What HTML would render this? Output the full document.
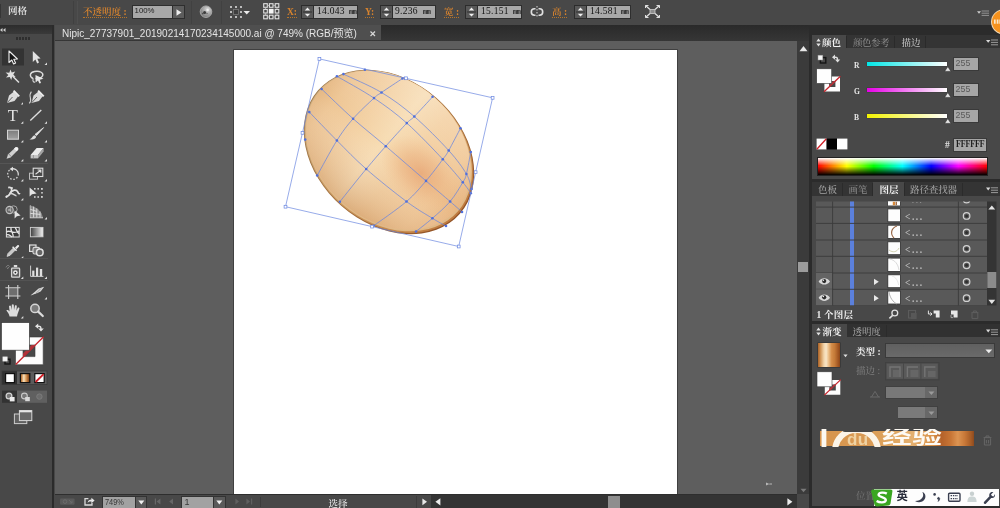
<!DOCTYPE html>
<html lang="zh"><head><meta charset="utf-8"><title>Illustrator</title>
<style>
*{margin:0;padding:0;box-sizing:border-box}
html,body{width:1000px;height:508px;overflow:hidden;background:#484848}
body{position:relative;font-family:"Liberation Serif","Noto Serif CJK SC",serif;font-size:9.5px;color:#ddd}
.a{position:absolute}
.ui{font-family:"Liberation Serif","Noto Serif CJK SC",serif;font-size:9.5px;line-height:10px;white-space:nowrap;font-weight:500}
.num{font-family:"Liberation Serif","Noto Serif CJK SC",serif;font-size:9.5px;line-height:10px;white-space:nowrap;color:#111;letter-spacing:0.3px}
.sans{font-family:"Liberation Sans","Noto Sans CJK SC",sans-serif;white-space:nowrap}
.field{background:#a8a8a8;border:1px solid #2e2e2e}
.or{color:#d9842e;font-weight:600}
.ul{border-bottom:1px dotted #b87428}
#root{position:absolute;left:0;top:0;width:1000px;height:508px;will-change:transform}
</style></head><body><div id="root">
<!-- top control bar -->
<div class="a" id="topbar" style="left:0;top:0;width:1000px;height:25px;background:#484848"></div>
<div class="a" style="left:0;top:4px;width:1.4px;height:14px;background:#363636"></div>
<div class="a ui" style="left:8px;top:6px;color:#e8e8e8;font-weight:600">网格</div>
<div class="a" style="left:73px;top:1px;width:1px;height:23px;background:#404040"></div>
<div class="a" style="left:77px;top:1px;width:1px;height:23px;background:#4f4f4f"></div>
<div class="a ui or ul" style="left:83px;top:7px;height:11px">不透明度 :</div>
<div class="a field" style="left:132px;top:5px;width:41px;height:14px"></div>
<div class="a sans" style="left:134.6px;top:6.4px;font-size:7.8px;line-height:10px;color:#1e1e1e">100%</div>
<div class="a" style="left:173px;top:5px;width:12px;height:14px;background:#5c5c5c;border:1px solid #2e2e2e;border-left:none"></div>
<svg class="a" style="left:176px;top:9px" width="6" height="7"><path d="M0.5 0.3 L5.5 3.5 L0.5 6.7Z" fill="#ededed"/></svg>
<div class="a" style="left:191px;top:1px;width:1px;height:23px;background:#414141"></div>
<!-- globe -->
<svg class="a" style="left:199px;top:5px" width="14" height="14"><defs><radialGradient id="glb" cx="0.65" cy="0.3" r="0.8"><stop offset="0" stop-color="#d8d8d8"/><stop offset="0.6" stop-color="#9a9a9a"/><stop offset="1" stop-color="#6e6e6e"/></radialGradient></defs><circle cx="7" cy="6.7" r="5.8" fill="url(#glb)" stroke="#b4b4b4" stroke-width="0.8"/><circle cx="5.6" cy="7.6" r="1.5" fill="#3c3c3c"/><circle cx="3.8" cy="8.6" r="0.8" fill="#4a4a4a"/><circle cx="8.6" cy="5" r="1.2" fill="#eee"/><circle cx="8" cy="8.6" r="0.7" fill="#555"/></svg>
<div class="a" style="left:221px;top:1px;width:1px;height:23px;background:#414141"></div>
<!-- align icon -->
<svg class="a" style="left:229px;top:5px" width="24" height="14"><g fill="#bcbcbc"><rect x="1" y="1" width="2" height="2"/><rect x="6" y="1" width="2" height="2"/><rect x="11" y="1" width="2" height="2"/><rect x="1" y="6" width="2" height="2"/><rect x="11" y="6" width="2" height="2"/><rect x="1" y="11" width="2" height="2"/><rect x="6" y="11" width="2" height="2"/><rect x="11" y="11" width="2" height="2"/></g><rect x="4.5" y="4.5" width="5" height="5" fill="#3e3e3e" stroke="#7a7a7a" stroke-width="0.8"/><path d="M14.5 6 L21 6 L17.75 9.5Z" fill="#ececec"/></svg>
<!-- 9-point reference -->
<svg class="a" style="left:263px;top:3px" width="17" height="17">
<g fill="#4a4a4a" stroke="#e2e2e2" stroke-width="1.1">
<rect x="0.7" y="0.7" width="3.6" height="3.6"/><rect x="6.4" y="0.7" width="3.6" height="3.6"/><rect x="12.2" y="0.7" width="3.6" height="3.6"/>
<rect x="0.7" y="6.4" width="3.6" height="3.6"/><rect x="12.2" y="6.4" width="3.6" height="3.6"/>
<rect x="0.7" y="12.2" width="3.6" height="3.6"/><rect x="6.4" y="12.2" width="3.6" height="3.6"/><rect x="12.2" y="12.2" width="3.6" height="3.6"/>
</g><path d="M4.3 2.5H6.4M10 2.5H12.2M4.3 14H6.4M10 14H12.2M2.5 4.3V6.4M2.5 10V12.2M14 4.3V6.4M14 10V12.2" stroke="#bdbdbd" stroke-width="0.8"/><rect x="5.8" y="5.8" width="4.8" height="4.8" fill="#f4f4f4"/></svg>
<div class="a ui or ul" style="left:287px;top:7px;height:11px">X:</div>
<div class="a ui or ul" style="left:365px;top:7px;height:11px">Y:</div>
<div class="a ui or ul" style="left:444px;top:7px;height:11px">宽 :</div>
<div class="a ui or ul" style="left:552px;top:7px;height:11px">高 :</div>
<div class="a" style="left:301px;top:5px;width:13px;height:14px;background:#585858;border:1px solid #2c2c2c"></div><svg class="a" style="left:303px;top:6px" width="9" height="12"><path d="M0 6H9" stroke="#333" stroke-width="1"/><path d="M1.8 4.4 L4.5 1.6 L7.2 4.4Z M1.8 7.8 L4.5 10.6 L7.2 7.8Z" fill="#f0f0f0"/></svg><div class="a field" style="left:314px;top:5px;width:44px;height:14px;border-left:none"></div><div class="a num" style="left:317px;top:6.4px">14.043</div><div class="a num" style="left:349px;top:6.9px;font-family:'Liberation Mono',monospace;font-size:6.8px;letter-spacing:-0.3px;color:#1a1a1a;font-weight:bold">mm</div>\n<div class="a" style="left:380px;top:5px;width:13px;height:14px;background:#585858;border:1px solid #2c2c2c"></div><svg class="a" style="left:382px;top:6px" width="9" height="12"><path d="M0 6H9" stroke="#333" stroke-width="1"/><path d="M1.8 4.4 L4.5 1.6 L7.2 4.4Z M1.8 7.8 L4.5 10.6 L7.2 7.8Z" fill="#f0f0f0"/></svg><div class="a field" style="left:393px;top:5px;width:43px;height:14px;border-left:none"></div><div class="a num" style="left:395px;top:6.4px">9.236</div><div class="a num" style="left:423px;top:6.9px;font-family:'Liberation Mono',monospace;font-size:6.8px;letter-spacing:-0.3px;color:#1a1a1a;font-weight:bold">mm</div>\n<div class="a" style="left:465px;top:5px;width:13px;height:14px;background:#585858;border:1px solid #2c2c2c"></div><svg class="a" style="left:467px;top:6px" width="9" height="12"><path d="M0 6H9" stroke="#333" stroke-width="1"/><path d="M1.8 4.4 L4.5 1.6 L7.2 4.4Z M1.8 7.8 L4.5 10.6 L7.2 7.8Z" fill="#f0f0f0"/></svg><div class="a field" style="left:478px;top:5px;width:44px;height:14px;border-left:none"></div><div class="a num" style="left:481px;top:6.4px">15.151</div><div class="a num" style="left:513px;top:6.9px;font-family:'Liberation Mono',monospace;font-size:6.8px;letter-spacing:-0.3px;color:#1a1a1a;font-weight:bold">mm</div>\n<div class="a" style="left:574px;top:5px;width:13px;height:14px;background:#585858;border:1px solid #2c2c2c"></div><svg class="a" style="left:576px;top:6px" width="9" height="12"><path d="M0 6H9" stroke="#333" stroke-width="1"/><path d="M1.8 4.4 L4.5 1.6 L7.2 4.4Z M1.8 7.8 L4.5 10.6 L7.2 7.8Z" fill="#f0f0f0"/></svg><div class="a field" style="left:587px;top:5px;width:44px;height:14px;border-left:none"></div><div class="a num" style="left:590px;top:6.4px">14.581</div><div class="a num" style="left:621px;top:6.9px;font-family:'Liberation Mono',monospace;font-size:6.8px;letter-spacing:-0.3px;color:#1a1a1a;font-weight:bold">mm</div>\n
<!-- link icon -->
<svg class="a" style="left:530px;top:6px" width="14" height="13"><g fill="none" stroke="#e0e0e0" stroke-width="1.6"><path d="M5.5 2.8 H4.5 A3.2 3.2 0 0 0 4.5 9.2 H5.5"/><path d="M8.5 2.8 H9.5 A3.2 3.2 0 0 1 9.5 9.2 H8.5"/></g><path d="M7 0 V12" stroke="#d8d8d8" stroke-width="1" stroke-dasharray="1.5 1.5"/></svg>
<!-- transform icon -->
<svg class="a" style="left:645px;top:5px" width="15" height="13"><g stroke="#e0e0e0" stroke-width="1.3" fill="none"><path d="M0.5 0.5 L5 4.5 M14.5 0.5 L10 4.5 M0.5 12.5 L5 8.5 M14.5 12.5 L10 8.5"/><path d="M0.5 3V0.5H3.5M11.5 0.5H14.5V3M0.5 10V12.5H3.5M11.5 12.5H14.5V10" stroke-width="1"/></g><rect x="5" y="4.5" width="5" height="4" fill="#8e8e8e" stroke="#d0d0d0" stroke-width="0.8"/></svg>
<!-- panel menu icon top right -->
<svg class="a" style="left:976.5px;top:9.6px" width="12" height="7"><path d="M0 1.2 L4 1.2 L2 3.8Z" fill="#ccc"/><path d="M4.6 1 H12 M4.6 3.2 H12 M4.6 5.4 H12" stroke="#9c9c9c" stroke-width="0.9"/></svg>
<!-- tab bar -->
<div class="a" id="tabbar" style="left:54.5px;top:25px;width:756.5px;height:16px;background:linear-gradient(#2a2a2a,#363636)"></div>
<div class="a" id="tab" style="left:54.5px;top:25px;width:326.5px;height:15px;background:#4f4f4f"></div>
<div class="a sans" style="left:62px;top:28px;font-size:10px;line-height:12px;color:#e4e4e4">Nipic_27737901_20190214170234145000.ai @ 749% (RGB/预览)</div>
<svg class="a" style="left:370px;top:31px" width="6" height="6"><path d="M0.5 0.5L5 5M5 0.5L0.5 5" stroke="#d8d8d8" stroke-width="1.2"/></svg>
<!-- canvas -->
<div class="a" id="canvas" style="left:54.5px;top:41px;width:742.5px;height:453px;background:#5e5e5e"></div>
<div class="a" id="artboard" style="left:233.6px;top:50.4px;width:443.8px;height:443.8px;background:#fff;box-shadow:0 0 0 0.9px #3e3e3e"></div>
<svg class="a" style="left:765px;top:481px" width="8" height="6"><!-- artefact --><path d="M1 1.6 L4.4 3 L1 4.4Z M4.4 2.6 H7 V3.4 H4.4Z" fill="#b8b8b8"/></svg>
<!-- egg -->
<svg class="a" style="left:234px;top:50px" width="444" height="444" viewBox="234 50 444 444">
<defs>
<linearGradient id="eggFill" x1="0" y1="0" x2="1" y2="0"><stop offset="0" stop-color="#e6b985"/><stop offset="0.1" stop-color="#eec695"/><stop offset="0.28" stop-color="#f3d0a2"/><stop offset="0.45" stop-color="#f7dcb3"/><stop offset="0.62" stop-color="#f3cfa0"/><stop offset="0.85" stop-color="#f0c694"/><stop offset="1" stop-color="#e8b682"/></linearGradient>
<radialGradient id="eggSpot" cx="0.5" cy="0.5" r="0.5"><stop offset="0" stop-color="#e6a070" stop-opacity="0.7"/><stop offset="0.5" stop-color="#e8a878" stop-opacity="0.38"/><stop offset="1" stop-color="#eeb888" stop-opacity="0"/></radialGradient>
<linearGradient id="eggRim" x1="0" y1="0" x2="1" y2="0"><stop offset="0" stop-color="#a07a4a"/><stop offset="0.5" stop-color="#a6703c"/><stop offset="1" stop-color="#935326"/></linearGradient>
<linearGradient id="eggRim2" x1="0" y1="0" x2="1" y2="0"><stop offset="0" stop-color="#c4a57c"/><stop offset="0.5" stop-color="#cc9c62"/><stop offset="1" stop-color="#c07c40"/></linearGradient>
<linearGradient id="eggShade" x1="0" y1="0" x2="0" y2="1"><stop offset="0" stop-color="#fff" stop-opacity="0.18"/><stop offset="0.5" stop-color="#fff" stop-opacity="0"/><stop offset="1" stop-color="#b06a30" stop-opacity="0.35"/></linearGradient>
<clipPath id="eggClip"><ellipse cx="389" cy="152" rx="94" ry="72" transform="rotate(41 389 152)"/></clipPath>
</defs>
<g transform="rotate(41 389 152)">
<ellipse cx="389" cy="152" rx="94" ry="72" fill="url(#eggRim)"/>
<ellipse cx="388.7" cy="151.8" rx="93" ry="71.2" fill="url(#eggRim2)"/>
<ellipse cx="388.1" cy="151.4" rx="91.8" ry="70.5" fill="#e0b987"/>
<ellipse cx="387.5" cy="151" rx="90.5" ry="70" fill="url(#eggFill)"/>
<ellipse cx="387.5" cy="151" rx="90.5" ry="70" fill="url(#eggShade)"/>
</g>
<g clip-path="url(#eggClip)"><ellipse cx="421" cy="173" rx="46" ry="30" transform="rotate(41 421 173)" fill="url(#eggSpot)"/></g>
<g fill="none" stroke="#6a86e0" stroke-width="0.75" clip-path="url(#eggClip)">
<path d="M343.4 74.1 C349.8 77.2 369.7 85.4 381.5 92.5 C393.3 99.6 403.1 106.8 414.3 116.5 C425.5 126.2 440.0 140.9 448.7 150.5 C457.4 160.1 462.6 167.6 466.4 174.0 C470.2 180.4 470.6 186.5 471.5 189.0"/>
<path d="M336.9 76.3 C343.1 79.9 362.4 90.3 374.0 98.1 C385.6 105.9 395.3 112.9 406.8 123.1 C418.3 133.3 433.5 149.4 442.8 159.3 C452.1 169.2 458.1 176.7 462.8 182.3 C467.5 188.0 469.5 191.4 470.8 193.2"/>
<path d="M321.6 89.0 C326.9 94.0 342.4 109.2 353.1 118.7 C363.8 128.2 373.7 135.8 385.8 146.2 C397.9 156.6 415.3 171.7 426.0 180.9 C436.7 190.1 444.1 196.3 450.1 201.5 C456.1 206.7 460.0 210.2 462.0 212.0"/>
<path d="M309.3 112.1 C313.9 116.8 327.4 131.0 336.9 140.5 C346.4 150.0 354.6 158.8 366.2 169.0 C377.8 179.2 395.5 193.3 406.5 201.5 C417.5 209.7 425.8 214.2 432.4 218.3 C439.0 222.4 443.7 224.7 446.0 226.0"/>
<path d="M402.5 78.5 C399.0 80.8 386.2 89.2 381.5 92.5 C376.8 95.8 378.7 93.7 374.0 98.1 C369.3 102.5 359.3 111.6 353.1 118.7 C346.9 125.8 342.9 131.0 336.9 140.5 C330.9 150.0 320.5 169.7 317.2 175.5"/>
<path d="M432.6 96.8 C429.6 100.1 418.6 112.1 414.3 116.5 C410.0 120.9 411.6 118.1 406.8 123.1 C402.1 128.0 392.6 138.5 385.8 146.2 C379.0 153.8 373.9 159.8 366.2 169.0 C358.5 178.2 344.3 196.2 339.9 201.7"/>
<path d="M460.5 128.3 C458.5 132.0 451.6 145.3 448.7 150.5 C445.8 155.7 446.6 154.2 442.8 159.3 C439.0 164.4 432.1 173.9 426.0 180.9 C419.9 187.9 415.2 194.0 406.5 201.5 C397.8 209.0 379.1 221.8 373.6 225.8"/>
<path d="M470.8 152.0 C470.1 155.7 467.7 168.9 466.4 174.0 C465.1 179.1 465.5 177.7 462.8 182.3 C460.1 186.9 455.2 195.5 450.1 201.5 C445.0 207.5 438.1 213.3 432.4 218.3 C426.7 223.3 418.7 229.3 416.0 231.5"/>
</g>
<g fill="#4f6fdc"><circle cx="305.2" cy="139.6" r="1.3"/><circle cx="309.3" cy="112.1" r="1.3"/><circle cx="317.2" cy="175.5" r="1.3"/><circle cx="321.6" cy="89" r="1.3"/><circle cx="336.9" cy="76.3" r="1.3"/><circle cx="336.9" cy="140.5" r="1.3"/><circle cx="339.9" cy="201.7" r="1.3"/><circle cx="343.4" cy="74.1" r="1.3"/><circle cx="353.1" cy="118.7" r="1.3"/><circle cx="364.9" cy="69.7" r="1.3"/><circle cx="366.2" cy="169" r="1.3"/><circle cx="373.6" cy="225.8" r="1.3"/><circle cx="374" cy="98.1" r="1.3"/><circle cx="381.5" cy="92.5" r="1.3"/><circle cx="385.8" cy="146.2" r="1.3"/><circle cx="402.5" cy="78.5" r="1.3"/><circle cx="406.5" cy="201.5" r="1.3"/><circle cx="406.8" cy="123.1" r="1.3"/><circle cx="414.3" cy="116.5" r="1.3"/><circle cx="416" cy="231.5" r="1.3"/><circle cx="426" cy="180.9" r="1.3"/><circle cx="432.4" cy="218.3" r="1.3"/><circle cx="432.6" cy="96.8" r="1.3"/><circle cx="442.8" cy="159.3" r="1.3"/><circle cx="446" cy="226" r="1.3"/><circle cx="448.7" cy="150.5" r="1.3"/><circle cx="450.1" cy="201.5" r="1.3"/><circle cx="460.5" cy="128.3" r="1.3"/><circle cx="462" cy="212" r="1.3"/><circle cx="462.8" cy="182.3" r="1.3"/><circle cx="466.4" cy="174" r="1.3"/><circle cx="470.8" cy="152" r="1.3"/><circle cx="470.8" cy="193.2" r="1.3"/><circle cx="471.5" cy="189" r="1.3"/></g>
<path d="M319.4 58.9 L492.6 97.8 L458.7 246.5 L285.5 206.7Z" fill="none" stroke="#6a86e0" stroke-width="0.7"/>
<g fill="#fff" stroke="#6a86e0" stroke-width="0.7"><rect x="318.0" y="57.5" width="2.8" height="2.8"/><rect x="491.2" y="96.4" width="2.8" height="2.8"/><rect x="457.3" y="245.1" width="2.8" height="2.8"/><rect x="284.1" y="205.3" width="2.8" height="2.8"/><rect x="404.6" y="76.9" width="2.8" height="2.8"/><rect x="474.2" y="170.8" width="2.8" height="2.8"/><rect x="370.7" y="225.2" width="2.8" height="2.8"/><rect x="301.1" y="131.4" width="2.8" height="2.8"/></g>
</svg>
<!-- toolbar -->
<div class="a" id="toolbar" style="left:0;top:25px;width:52px;height:483px;background:#484848"></div>
<div class="a" style="left:0;top:25px;width:52px;height:9px;background:linear-gradient(#2c2c2c,#3a3a3a)"></div>
<div class="a" style="left:52.3px;top:25px;width:2.2px;height:483px;background:#2b2b2b"></div>
<svg class="a" style="left:0;top:25px" width="52" height="483" viewBox="0 25 52 483">
<defs>
<linearGradient id="gCop" x1="0" x2="1" y1="0" y2="0"><stop offset="0" stop-color="#8a4e20"/><stop offset="0.15" stop-color="#c88848"/><stop offset="0.36" stop-color="#f8e4c4"/><stop offset="0.55" stop-color="#e2aa6a"/><stop offset="0.8" stop-color="#a8622a"/><stop offset="1" stop-color="#6a3814"/></linearGradient>
<linearGradient id="gGray" x1="0" x2="1"><stop offset="0" stop-color="#3c3c3c"/><stop offset="1" stop-color="#f4f4f4"/></linearGradient>
<linearGradient id="gRect" x1="0" x2="0" y1="0" y2="1"><stop offset="0" stop-color="#7c7c7c"/><stop offset="1" stop-color="#a0a0a0"/></linearGradient>
</defs>
<!-- collapse arrows -->
<path d="M0 30 L2.5 28 V32Z M3 30 L5.5 28 V32Z" fill="#d0d0d0"/>
<!-- grip -->
<path d="M16 38.5H31" stroke="#2e2e2e" stroke-width="3" stroke-dasharray="2 1"/>
<!-- selection tool (selected) -->
<rect x="2" y="48.5" width="22" height="17" fill="#333"/>
<path d="M9 51 V62.5 L11.8 60 L13.6 64 L15.6 63 L13.8 59.2 L17.4 59Z" fill="#151515" stroke="#f0f0f0" stroke-width="1.1" stroke-linejoin="round"/>
<!-- direct selection -->
<path d="M32.8 51 V62 L35.4 59.6 L37.2 63.4 L39 62.5 L37.3 58.8 L40.6 58.6Z" fill="#e2e2e2"/>
<g fill="#dedede" id="dots">
<path d="M47 62.5V65H44.5Z"/>
<path d="M23 102.3V104.5H20.8Z"/>
<path d="M23.3 121.3V123.8H20.8Z"/><path d="M47 121.3V123.8H44.5Z"/>
<path d="M23.3 140V142.5H20.8Z"/><path d="M47 140V142.5H44.5Z"/>
<path d="M23.3 159V161.5H20.8Z"/><path d="M47 159V161.5H44.5Z"/>
<path d="M23.3 179V181.5H20.8Z"/><path d="M47 179V181.5H44.5Z"/>
<path d="M23.3 198V200.5H20.8Z"/>
<path d="M23.3 217V219.5H20.8Z"/><path d="M47 217V219.5H44.5Z"/>
<path d="M23.3 256V258.5H20.8Z"/>
<path d="M23.3 276.5V279H20.8Z"/><path d="M47 276.5V279H44.5Z"/>
<path d="M47 297V299.5H44.5Z"/>
<path d="M23.3 316V318.5H20.8Z"/>
</g>
<!-- magic wand -->
<path d="M10.5 69.5 L11.7 72.6 L15.2 71.6 L13.3 74.4 L15.6 77 L12.2 76.8 L11.2 80 L9.8 76.9 L6 77.6 L8.4 75 L5.6 72.6 L9.3 72.8Z" fill="#e0e0e0"/>
<path d="M13 76.5 L19 82.5" stroke="#e0e0e0" stroke-width="1.5"/>
<!-- lasso -->
<path d="M33 78.5 C29 76.5 29.5 72.5 34.5 71.5 C40 70.5 44 73 42.5 76 C41.5 78 38 79 35.5 78.3" fill="none" stroke="#dcdcdc" stroke-width="1.4"/>
<path d="M35.5 75 L43.5 78.8 L39.8 79.8 L41 83 L39.4 83.4 L38 80.4 L35.6 82.5Z" fill="#e6e6e6"/>
<path d="M33.5 78.5 C32 80.5 33.5 82.5 35 82" fill="none" stroke="#dcdcdc" stroke-width="1.1"/>
<!-- pen -->
<path d="M7 103 L9 95.5 L14 91.5 L18 96.5 L14.5 101 Z" fill="#dadada"/>
<path d="M7.3 102.6 L12.5 97" stroke="#555" stroke-width="0.9"/>
<path d="M13.6 90.6 L19.2 96.4" stroke="#ececec" stroke-width="2"/>
<!-- curvature pen -->
<path d="M31.5 103 L33.5 95.5 L38.5 91.5 L42.5 96.5 L39 101 Z" fill="#dadada"/>
<path d="M31.8 102.6 L37 97" stroke="#555" stroke-width="0.9"/>
<path d="M38.1 90.6 L43.7 96.4" stroke="#ececec" stroke-width="2"/>
<path d="M29.2 103.4 C33.4 99.4 27.4 96.4 31.4 91.6" fill="none" stroke="#d0d0d0" stroke-width="1.1"/>
<!-- T -->
<text x="12.8" y="121" font-family="Liberation Serif, serif" font-size="16.5" fill="#e2e2e2" text-anchor="middle">T</text>
<!-- line -->
<path d="M30.3 120.4 L41.3 110" stroke="#dedede" stroke-width="1.4"/>
<!-- rect -->
<rect x="7.5" y="130.2" width="11" height="9" fill="url(#gRect)" stroke="#d4d4d4" stroke-width="1"/>
<!-- brush -->
<path d="M43.6 127.6 L36.5 135.6 L35 134.4Z" fill="#e6e6e6" stroke="#e6e6e6" stroke-width="0.8"/>
<path d="M29.4 139.2 C32 138.8 32.5 135.5 34.6 135.2 L36.2 136.8 C35.6 139.4 32.5 140 29.4 139.2Z" fill="#dcdcdc"/>
<!-- pencil -->
<path d="M6.6 158.8 L8 154.6 L15.4 147.4 C17 146 19.4 148.4 18 150 L10.6 157.4Z" fill="#cfcfcf"/>
<path d="M15.2 147.6 C16.8 146.2 19.2 148.4 17.8 150 L16.6 151.2 L14 148.7Z" fill="#f2f2f2"/>
<path d="M8.6 153.8 L11.2 156.6" stroke="#777" stroke-width="0.8"/>
<!-- eraser -->
<path d="M30.6 155 L36.6 148 L43.6 148 L38 155Z" fill="#ececec"/>
<path d="M30.6 155 H38 V158.4 H30.6Z" fill="#c6c6c6"/>
<path d="M38 155 L43.6 148 V151.4 L38 158.4Z" fill="#a4a4a4"/>
<path d="M33.4 155 V158.4" stroke="#8a8a8a" stroke-width="0.8"/>
<!-- separators -->
<path d="M0 163.5H48" stroke="#555" stroke-width="1"/>
<path d="M0 258.5H48" stroke="#535353" stroke-width="1"/>
<path d="M0 280.5H48" stroke="#535353" stroke-width="1"/>
<!-- rotate -->
<path d="M12.5 168.8 A5.3 5.3 0 0 1 18.3 174" fill="none" stroke="#dcdcdc" stroke-width="1.3"/>
<path d="M18.3 174 A5.3 5.3 0 1 1 12 168.9" fill="none" stroke="#cfcfcf" stroke-width="1.3" stroke-dasharray="1.6 1.6"/>
<path d="M13 166.8 L9.6 169 L13 171.2Z" fill="#e0e0e0"/>
<!-- scale -->
<rect x="29.5" y="173.2" width="8" height="6" fill="none" stroke="#bdbdbd" stroke-width="1"/>
<rect x="33.2" y="168.2" width="9.6" height="8.3" fill="#484848" stroke="#dedede" stroke-width="1.1"/>
<path d="M35.5 174.3 L40.6 170.2 M37.6 170 H40.8 V172.8" fill="none" stroke="#dedede" stroke-width="1.1"/>
<!-- width tool -->
<path d="M8.2 187.6 C12 186.6 12.6 190 10.4 193.2 C9 195.4 7.4 196.6 6 196.6" fill="none" stroke="#e0e0e0" stroke-width="1.7"/>
<path d="M9.6 193.6 C12.6 189 16.6 189.4 17.8 192 C18.6 193.6 19.4 194.4 19.6 193" fill="none" stroke="#e0e0e0" stroke-width="1.7"/>
<path d="M10.5 193.5 C13.5 193.3 14.5 196 16.5 195.6" fill="none" stroke="#d4d4d4" stroke-width="1.5"/>
<circle cx="6.4" cy="196.8" r="1.1" fill="#e6e6e6"/><circle cx="12" cy="188" r="0.9" fill="#e6e6e6"/>
<!-- free transform -->
<path d="M29.6 187.6 V196.4 L32 194.2 L36.6 193.4Z" fill="#e4e4e4"/>
<g fill="#d2d2d2"><rect x="34" y="188" width="1.6" height="1.6"/><rect x="37.4" y="188" width="1.6" height="1.6"/><rect x="41" y="188" width="1.8" height="1.8"/><rect x="41.2" y="192" width="1.6" height="1.6"/><rect x="41" y="196" width="1.8" height="1.8"/><rect x="37.4" y="196.2" width="1.6" height="1.6"/><rect x="34" y="196.2" width="1.6" height="1.6"/></g>
<!-- shape builder -->
<circle cx="9.6" cy="210" r="3.6" fill="#6a6a6a" stroke="#c4c4c4" stroke-width="1.1"/>
<circle cx="13.6" cy="209.4" r="3.6" fill="none" stroke="#a8a8a8" stroke-width="1"/>
<path d="M8 210H11.2" stroke="#c8c8c8" stroke-width="1"/>
<path d="M14.6 210.6 V218.4 L16.8 216.2 L20.6 215.6Z" fill="#e4e4e4"/>
<!-- perspective grid -->
<path d="M30.4 205.4 V217.6 H43" fill="none" stroke="#dcdcdc" stroke-width="1.2"/>
<path d="M30.4 205.6 L34.2 206.8 L38.4 209.6 L41.6 213.4 L43 217.4 H30.4Z" fill="#8c8c8c"/>
<path d="M33.6 206.6 V217.4 M36.8 208.4 V217.4 M40 211.4 V217.4 M30.4 209.4 L36.8 211.4 M30.4 213.4 L40.2 214.4" stroke="#e2e2e2" stroke-width="0.9" fill="none"/>
<!-- mesh tool -->
<rect x="6.4" y="227.4" width="12.8" height="9.6" fill="#3a3a3a" stroke="#e0e0e0" stroke-width="1"/>
<path d="M6.4 232 C10 229 12 235 19.2 231 M11 227.4 C10 231 14 233 13 237 M6.4 235 C9 233.6 10 236 12 237 M15 227.4 C17 229.4 16 232 19.2 233.6" fill="none" stroke="#e6e6e6" stroke-width="1.3"/>
<!-- gradient tool -->
<rect x="30.4" y="227.4" width="12.6" height="9.4" fill="url(#gGray)" stroke="#cfcfcf" stroke-width="0.9"/>
<!-- eyedropper -->
<path d="M7 256.4 L8 253.4 L13.6 247.8 L15.6 249.8 L10 255.4Z" fill="#c8c8c8" stroke="#dedede" stroke-width="0.7"/>
<path d="M12.6 246.8 L16.6 250.8" stroke="#e8e8e8" stroke-width="1.5"/>
<path d="M15 247.6 L17.2 245.4 C18.4 244.2 19.8 245.6 18.8 246.8 L16.4 249.2Z" fill="#eaeaea"/>
<!-- blend -->
<rect x="29.6" y="245" width="6.4" height="6.4" fill="#5a5a5a" stroke="#e0e0e0" stroke-width="1.2"/>
<rect x="33" y="247.4" width="6.6" height="6.6" rx="1.6" fill="#7a7a7a" stroke="#d8d8d8" stroke-width="1.1"/>
<circle cx="39.8" cy="252.4" r="3.3" fill="#666" stroke="#e4e4e4" stroke-width="1.5"/>
<!-- symbol sprayer -->
<rect x="11.6" y="268.2" width="8" height="9" rx="0.8" fill="#5a5a5a" stroke="#d6d6d6" stroke-width="1.3"/>
<rect x="13.8" y="265" width="3.4" height="2.2" fill="#dcdcdc"/>
<circle cx="15.4" cy="272.6" r="2.3" fill="#ececec"/><circle cx="15.4" cy="272.6" r="0.9" fill="#222"/>
<path d="M6 267.4 C7 265 9 265 9.6 266.6 M7 268.6 L9 267.4" stroke="#8e8e8e" stroke-width="0.9" fill="none"/>
<!-- graph -->
<path d="M30.6 265.6 V276.4 H43.4" fill="none" stroke="#cfcfcf" stroke-width="1"/>
<rect x="32.2" y="270.6" width="2.2" height="5.6" fill="#e0e0e0"/><rect x="36" y="267.6" width="2.2" height="8.6" fill="#e0e0e0"/><rect x="39.8" y="269" width="2.4" height="7.2" fill="#e0e0e0"/>
<!-- artboard tool -->
<rect x="9" y="288.2" width="8.4" height="7.6" fill="#6e6e6e"/>
<path d="M8.6 285 V299 M17.8 285 V299 M5.4 287.8 H20.4 M5.4 296 H20.4" stroke="#cfcfcf" stroke-width="1.1" fill="none"/>
<!-- slice -->
<path d="M30.4 295.6 L44 286.8 L37 293.4 L37.6 292.2Z" fill="#e2e2e2"/>
<path d="M30.6 295.4 L38.6 288.4 L44.2 286.8 L40.6 291.6 L36.6 293.2Z" fill="#d6d6d6"/>
<path d="M36.4 293 L40.8 288.6" stroke="#8a8a8a" stroke-width="0.8"/>
<!-- hand -->
<path d="M9.6 316.4 C9 313.6 7.6 312 6.4 310.4 C7.2 309.4 8.6 310 9.6 311.4 L9 306.2 C9.6 305.2 10.8 305.4 11 306.4 L11.6 310 L11.8 304.8 C12.4 303.8 13.6 304 13.8 305 L14 310 L15 305.6 C15.6 304.8 16.8 305.2 16.8 306.2 L16.4 310.8 L17.8 307.8 C18.6 307.2 19.6 307.8 19.4 308.8 C18.6 311.4 17.6 313.6 17 316.4Z" fill="#dcdcdc"/>
<!-- zoom -->
<circle cx="35" cy="308.4" r="4.2" fill="#7a7a7a" stroke="#d6d6d6" stroke-width="1.5"/>
<path d="M38.2 311.6 L42.8 316" stroke="#dcdcdc" stroke-width="2.2" stroke-linecap="round"/>
<!-- fill / stroke -->
<path d="M15.5 337 H43.2 V364.7 H15.5Z M23 345 V356.6 H35 V345Z" fill="#fdfdfd" fill-rule="evenodd" stroke="#3a3a3a" stroke-width="0.6"/>
<path d="M15.7 364.5 L43.6 336.8" stroke="#c8242c" stroke-width="1.3"/>
<path d="M23 356.6 L23 353.6 L31.6 345 L35 345 L35 345.2 L23.6 356.6Z" fill="#b0343a"/>
<rect x="1.4" y="322.6" width="28" height="27.6" fill="#fefefe" stroke="#3a3a3a" stroke-width="0.7"/>
<!-- swap arrows -->
<path d="M35 326.2 L38.2 323.6 V325.4 C41 325.4 41.6 326.6 41.6 328.4 L43.8 328.4 L41 331.4 L38.2 328.4 L40.2 328.4 C40.2 327.4 39.8 327 38.2 327 V328.8Z" fill="#e4e4e4"/>
<!-- default fill/stroke -->
<rect x="5" y="359.2" width="5" height="4.8" fill="#484848" stroke="#151515" stroke-width="1.4"/>
<rect x="2.8" y="356.8" width="4.6" height="4.4" fill="#f4f4f4" stroke="#bbb" stroke-width="0.5"/>
<!-- color mode buttons -->
<rect x="2" y="371" width="15" height="13.6" fill="#303030"/>
<rect x="17" y="371" width="30" height="13.6" fill="#5c5c5c"/>
<rect x="2" y="371" width="45" height="13.6" fill="none" stroke="#3a3a3a" stroke-width="0.8"/>
<rect x="5.6" y="373.6" width="8.8" height="9" fill="#fff" stroke="#111" stroke-width="1.2"/>
<rect x="20.4" y="373.6" width="9.4" height="9" fill="url(#gCop)" stroke="#111" stroke-width="1.2"/>
<rect x="34.8" y="373.6" width="9.4" height="9" fill="#fff" stroke="#111" stroke-width="1.2"/>
<path d="M35.6 382 L43.6 374.2" stroke="#d01c24" stroke-width="1.8"/>
<!-- draw modes -->
<rect x="2" y="390.6" width="15" height="12.2" fill="#323232"/>
<rect x="17" y="390.6" width="30" height="12.2" fill="#606060"/>
<circle cx="9" cy="396" r="2.9" fill="#777" stroke="#d4d4d4" stroke-width="1.2"/>
<rect x="9.8" y="397" width="4.8" height="4.4" fill="#eaeaea"/>
<circle cx="24.4" cy="396" r="2.9" fill="#777" stroke="#c8c8c8" stroke-width="1.1"/>
<rect x="25.2" y="397" width="4.6" height="4.2" fill="#d8d8d8"/>
<circle cx="39.4" cy="396.6" r="2.7" fill="#6c6c6c" stroke="#7c7c7c" stroke-width="1"/>
<!-- screen mode -->
<rect x="14.4" y="414" width="12.4" height="9.6" fill="#606060" stroke="#cdcdcd" stroke-width="1"/>
<rect x="19.4" y="410.6" width="12.4" height="10" fill="#686868" stroke="#d8d8d8" stroke-width="1"/>
<path d="M19.4 411.4H31.8" stroke="#e6e6e6" stroke-width="1.8"/>
</svg>
<!-- bottom status bar -->
<div class="a" id="status" style="left:54.5px;top:494px;width:742.5px;height:14px;background:#484848"></div>
<div class="a" style="left:54.5px;top:494px;width:742.5px;height:1.4px;background:#2e2e2e"></div>
<svg class="a" style="left:59px;top:497px" width="18" height="9"><rect x="1" y="1.4" width="14.6" height="6.4" rx="1" fill="#5a5a5a"/><circle cx="6" cy="4.6" r="1.8" fill="none" stroke="#6c6c6c" stroke-width="1"/><path d="M10 3 L13 6 M13 3.6 V6 H10.6" stroke="#6c6c6c" stroke-width="0.9" fill="none"/></svg>
<svg class="a" style="left:84px;top:497px" width="12" height="9"><path d="M4.4 1.6 H1 V8 H8 V6" fill="none" stroke="#dadada" stroke-width="1.3"/><path d="M3.6 6 C4 3.6 5.6 2.6 7.4 2.6 V0.8 L10.6 3.6 L7.4 6.2 V4.6 C5.8 4.4 4.6 4.8 3.6 6Z" fill="#e8e8e8"/></svg>
<div class="a" style="left:102.4px;top:495.6px;width:34px;height:13px;background:#a2a2a2;border:1px solid #333"></div>
<div class="a sans" style="left:104.6px;top:497.4px;font-size:9px;line-height:10px;color:#383838;transform:scaleX(0.82);transform-origin:0 0">749%</div>
<div class="a" style="left:136px;top:495.6px;width:11.4px;height:13px;background:#5a5a5a;border:1px solid #333;border-left:none"></div>
<svg class="a" style="left:138px;top:500px" width="7" height="5"><path d="M0.3 0.4 L6.3 0.4 L3.3 4.6Z" fill="#f0f0f0"/></svg>
<svg class="a" style="left:154px;top:498px" width="22" height="7"><path d="M1.4 0.6 V6.4" stroke="#686868" stroke-width="1.2"/><path d="M6.4 0.6 L2.6 3.5 L6.4 6.4Z M19 0.6 L15.2 3.5 L19 6.4Z" fill="#666"/></svg>
<div class="a" style="left:181px;top:495.6px;width:33px;height:13px;background:#a2a2a2;border:1px solid #333"></div>
<div class="a sans" style="left:184.6px;top:497.4px;font-size:9px;line-height:10px;color:#383838">1</div>
<div class="a" style="left:214px;top:495.6px;width:12px;height:13px;background:#5a5a5a;border:1px solid #333;border-left:none"></div>
<svg class="a" style="left:216.4px;top:500px" width="7" height="5"><path d="M0.3 0.4 L6.3 0.4 L3.3 4.6Z" fill="#f0f0f0"/></svg>
<svg class="a" style="left:234px;top:498px" width="22" height="7"><path d="M1.4 0.6 L5 3.5 L1.4 6.4Z M12.4 0.6 L16 3.5 L12.4 6.4Z" fill="#606060"/><path d="M17.6 0.6 V6.4" stroke="#606060" stroke-width="1.2"/></svg>
<div class="a" style="left:260px;top:497px;width:1px;height:10px;background:#3c3c3c"></div>
<div class="a ui" style="left:328.4px;top:498.6px;color:#ececec">选择</div>
<div class="a" style="left:416px;top:496px;width:1px;height:12px;background:#3c3c3c"></div>
<svg class="a" style="left:421.6px;top:498.4px" width="6" height="8"><path d="M0.4 0.4 L5 3.8 L0.4 7.2Z" fill="#e8e8e8"/></svg>
<!-- hscroll -->
<div class="a" style="left:431px;top:495.4px;width:366px;height:12.6px;background:#343434"></div>
<svg class="a" style="left:434.6px;top:498px" width="6" height="8"><path d="M5.4 0.2 L0.4 3.8 L5.4 7.4Z" fill="#ececec"/></svg>
<div class="a" style="left:607.8px;top:496px;width:12px;height:12px;background:#8e8e8e"></div>
<svg class="a" style="left:787px;top:498px" width="6" height="8"><path d="M0.4 0.2 L5.4 3.8 L0.4 7.4Z" fill="#ececec"/></svg>
<!-- right scrollbar -->
<div class="a" id="vscroll" style="left:797px;top:41px;width:12px;height:453px;background:#3b3b3b"></div>
<svg class="a" style="left:799px;top:45px" width="9" height="7"><path d="M0.5 6.2 L4.5 1 L8.5 6.2Z" fill="#e8e8e8"/></svg>
<div class="a" style="left:798px;top:262px;width:10px;height:10px;background:#9c9c9c"></div>
<svg class="a" style="left:800px;top:488px" width="7" height="5"><path d="M0.5 0.8 L6.5 0.8 L3.5 4.2Z" fill="#7a7a7a"/></svg>
<div class="a" style="left:797px;top:494px;width:12px;height:14px;background:#484848"></div>
<!-- right dock -->
<div class="a" id="rdock" style="left:809px;top:25px;width:191px;height:483px;background:#2b2b2b"></div>
<div class="a" style="left:812px;top:35px;width:188px;height:14px;background:#343434"></div>
<!-- color panel -->
<div class="a" style="left:812px;top:48px;width:188px;height:131.3px;background:#484848"></div>
<div class="a" style="left:812px;top:35px;width:34px;height:14px;background:#484848"></div>
<svg class="a" style="left:816px;top:38px" width="5" height="9"><path d="M0.3 3.6 L2.5 0.6 L4.7 3.6Z M0.3 5.4 L2.5 8.4 L4.7 5.4Z" fill="#e0e0e0"/></svg>
<div class="a ui" style="left:822px;top:38px;color:#f2f2f2;font-weight:bold">颜色</div>
<div class="a ui" style="left:853px;top:38px;color:#8c8c8c;letter-spacing:-0.5px">颜色参考</div>
<div class="a ui" style="left:901.5px;top:38px;color:#c2c2c2">描边</div>
<div class="a" style="left:846px;top:36px;width:1px;height:12px;background:#2a2a2a"></div>
<div class="a" style="left:894px;top:36px;width:1px;height:12px;background:#2a2a2a"></div>
<div class="a" style="left:925px;top:36px;width:1px;height:12px;background:#2a2a2a"></div>
<svg class="a" style="left:986px;top:39px" width="12" height="7"><path d="M0 1 L4.4 1 L2.2 3.8Z" fill="#d8d8d8"/><path d="M5 1 H12 M5 3.4 H12 M5 5.8 H12" stroke="#9a9a9a" stroke-width="1"/></svg>
<!-- default + swap -->
<svg class="a" style="left:816px;top:53px" width="26" height="12">
<rect x="4.4" y="4.6" width="5.4" height="5.4" fill="#484848" stroke="#151515" stroke-width="1.4"/>
<rect x="2" y="2.2" width="4.8" height="4.8" fill="#f4f4f4" stroke="#999" stroke-width="0.5"/>
<path d="M16 4.2 L19 1.6 V3.4 C21.6 3.4 22.2 4.6 22.2 6.4 L24.2 6.4 L21.6 9.4 L19 6.4 L20.8 6.4 C20.8 5.4 20.4 5 19 5 V6.8Z" fill="#dedede"/>
</svg>
<!-- fill / stroke -->
<svg class="a" style="left:815px;top:67px" width="27" height="26">
<path d="M9.4 9.6 H25 V24.4 H9.4Z M14 14 V20 H20.4 V14Z" fill="#fdfdfd" fill-rule="evenodd"/>
<path d="M9 24.8 L25.4 9.2" stroke="#c8242c" stroke-width="1.3"/>
<path d="M14 20 L14 18 L18.4 14 L20.4 14 L20.4 14.4 L14.6 20Z" fill="#b0343a"/>
<rect x="1.7" y="1.8" width="15" height="14.6" fill="#fefefe" stroke="#3c3c3c" stroke-width="0.6"/>
</svg>
<div class="a ui" style="left:854px;top:59.5px;color:#e6e6e6;font-weight:bold;font-size:9px;transform:scaleX(0.84);transform-origin:0 0">R</div><div class="a" style="left:867px;top:61.5px;width:80.3px;height:4px;background:linear-gradient(90deg,#00e6e6,#fff);box-shadow:0 0 0 0.5px #3c3c3c"></div><svg class="a" style="left:944px;top:65.5px" width="8" height="6"><path d="M0.6 5.4 L3.8 0.6 L7 5.4Z" fill="#e4e4e4" stroke="#333" stroke-width="0.6"/></svg><div class="a" style="left:953px;top:57.0px;width:26px;height:14px;background:#a6a6a6;border:1px solid #3a3a3a"></div><div class="a sans" style="left:955.6px;top:57.5px;font-size:8.8px;line-height:10px;color:#5a5a5a">255</div>
<div class="a ui" style="left:854px;top:85.5px;color:#e6e6e6;font-weight:bold;font-size:9px;transform:scaleX(0.84);transform-origin:0 0">G</div><div class="a" style="left:867px;top:87.5px;width:80.3px;height:4px;background:linear-gradient(90deg,#e600e6,#fff);box-shadow:0 0 0 0.5px #3c3c3c"></div><svg class="a" style="left:944px;top:91.5px" width="8" height="6"><path d="M0.6 5.4 L3.8 0.6 L7 5.4Z" fill="#e4e4e4" stroke="#333" stroke-width="0.6"/></svg><div class="a" style="left:953px;top:83.0px;width:26px;height:14px;background:#a6a6a6;border:1px solid #3a3a3a"></div><div class="a sans" style="left:955.6px;top:83.5px;font-size:8.8px;line-height:10px;color:#5a5a5a">255</div>
<div class="a ui" style="left:854px;top:111.5px;color:#e6e6e6;font-weight:bold;font-size:9px;transform:scaleX(0.84);transform-origin:0 0">B</div><div class="a" style="left:867px;top:113.5px;width:80.3px;height:4px;background:linear-gradient(90deg,#f2f200,#fff);box-shadow:0 0 0 0.5px #3c3c3c"></div><svg class="a" style="left:944px;top:117.5px" width="8" height="6"><path d="M0.6 5.4 L3.8 0.6 L7 5.4Z" fill="#e4e4e4" stroke="#333" stroke-width="0.6"/></svg><div class="a" style="left:953px;top:109.0px;width:26px;height:14px;background:#a6a6a6;border:1px solid #3a3a3a"></div><div class="a sans" style="left:955.6px;top:109.5px;font-size:8.8px;line-height:10px;color:#5a5a5a">255</div>

<!-- small swatches -->
<svg class="a" style="left:816px;top:138px" width="32" height="12">
<rect x="0.6" y="0.6" width="10" height="10.8" fill="#fff"/><path d="M0.8 11.2 L10.4 0.8" stroke="#d02028" stroke-width="1.3"/>
<rect x="10.6" y="0.6" width="10.4" height="10.8" fill="#000"/>
<rect x="21" y="0.6" width="10.4" height="10.8" fill="#fff"/>
</svg>
<div class="a ui" style="left:945px;top:140px;color:#e0e0e0;font-weight:bold">#</div>
<div class="a" style="left:953px;top:138px;width:34px;height:13.5px;background:#a6a6a6;border:1px solid #3a3a3a"></div>
<div class="a num" style="left:956px;top:139.4px;font-weight:bold;color:#1c1c1c;font-size:10px;letter-spacing:-0.1px;transform:scaleX(0.79);transform-origin:0 0">FFFFFF</div>
<!-- spectrum -->
<div class="a" style="left:817px;top:157px;width:171px;height:18.5px;background:#222"></div>
<div class="a" style="left:817.7px;top:157.7px;width:169.5px;height:17px;background:linear-gradient(180deg,rgba(255,255,255,1) 0%,rgba(255,255,255,0) 45%,rgba(0,0,0,0) 50%,rgba(0,0,0,1) 100%),linear-gradient(90deg,#f00 0%,#ff0 17%,#0f0 33%,#0ff 50%,#00f 67%,#f0f 83%,#f00 100%)"></div>

<!-- layers panel -->
<div class="a" style="left:812px;top:182px;width:188px;height:15px;background:#343434"></div>
<div class="a" style="left:812px;top:196px;width:188px;height:125px;background:#484848"></div>
<div class="a" style="left:873px;top:182px;width:31px;height:15px;background:#484848"></div>
<div class="a" style="left:842px;top:183px;width:1px;height:13px;background:#2b2b2b"></div>
<div class="a" style="left:872px;top:183px;width:1px;height:13px;background:#2b2b2b"></div>
<div class="a" style="left:904px;top:183px;width:1px;height:13px;background:#2b2b2b"></div>
<div class="a" style="left:962px;top:183px;width:1px;height:13px;background:#2b2b2b"></div>
<div class="a ui" style="left:818px;top:185px;color:#a4a4a4">色板</div>
<div class="a ui" style="left:848.5px;top:185px;color:#8a8a8a">画笔</div>
<div class="a ui" style="left:879.5px;top:185px;color:#f2f2f2;font-weight:bold">图层</div>
<div class="a ui" style="left:910px;top:185px;color:#a4a4a4;letter-spacing:-0.1px">路径查找器</div>
<svg class="a" style="left:986px;top:187px" width="12" height="7"><path d="M0 0.6 L4.4 0.6 L2.2 3.4Z" fill="#d8d8d8"/><path d="M5 0.8 H12 M5 3.2 H12 M5 5.6 H12" stroke="#9a9a9a" stroke-width="1"/></svg>
<svg class="a" style="left:812px;top:199px" width="188" height="123" viewBox="812 199 188 123">
<defs><clipPath id="lc"><rect x="816" y="201.5" width="171" height="104"/></clipPath></defs>
<rect x="816" y="201.5" width="171" height="104" fill="#595959"/>
<g clip-path="url(#lc)">
<rect x="850" y="199" width="4" height="107" fill="#5b80dc"/>
<path d="M816 207.1H987" stroke="#3a3a3a" stroke-width="0.9"/><rect x="887.8" y="192.5" width="12.6" height="13.000000000000005" fill="#fdfdfd" stroke="#2c2c2c" stroke-width="0.8"/><circle cx="966.6" cy="199.59999999999997" r="3.3" fill="#5a5a5a" stroke="#d2d2d2" stroke-width="1.2"/><circle cx="966.6" cy="199.59999999999997" r="1.5" fill="#2e2e2e"/>
<path d="M816 223.4H987" stroke="#3a3a3a" stroke-width="0.9"/><rect x="887.8" y="208.9" width="12.6" height="12.900000000000011" fill="#fdfdfd" stroke="#2c2c2c" stroke-width="0.8"/><circle cx="966.6" cy="215.95" r="3.3" fill="#5a5a5a" stroke="#d2d2d2" stroke-width="1.2"/><circle cx="966.6" cy="215.95" r="1.5" fill="#2e2e2e"/>
<path d="M816 240H987" stroke="#3a3a3a" stroke-width="0.9"/><rect x="887.8" y="225.20000000000002" width="12.6" height="13.199999999999994" fill="#fdfdfd" stroke="#2c2c2c" stroke-width="0.8"/><circle cx="966.6" cy="232.39999999999998" r="3.3" fill="#5a5a5a" stroke="#d2d2d2" stroke-width="1.2"/><circle cx="966.6" cy="232.39999999999998" r="1.5" fill="#2e2e2e"/>
<path d="M816 256.3H987" stroke="#3a3a3a" stroke-width="0.9"/><rect x="887.8" y="241.8" width="12.6" height="12.900000000000011" fill="#fdfdfd" stroke="#2c2c2c" stroke-width="0.8"/><circle cx="966.6" cy="248.85" r="3.3" fill="#5a5a5a" stroke="#d2d2d2" stroke-width="1.2"/><circle cx="966.6" cy="248.85" r="1.5" fill="#2e2e2e"/>
<path d="M816 273H987" stroke="#3a3a3a" stroke-width="0.9"/><rect x="887.8" y="258.1" width="12.6" height="13.299999999999988" fill="#fdfdfd" stroke="#2c2c2c" stroke-width="0.8"/><circle cx="966.6" cy="265.34999999999997" r="3.3" fill="#5a5a5a" stroke="#d2d2d2" stroke-width="1.2"/><circle cx="966.6" cy="265.34999999999997" r="1.5" fill="#2e2e2e"/>
<rect x="816" y="273" width="16.6" height="16.30000000000001" fill="#646464"/><path d="M816 289.3H987" stroke="#3a3a3a" stroke-width="0.9"/><rect x="887.8" y="274.8" width="12.6" height="12.900000000000011" fill="#fdfdfd" stroke="#2c2c2c" stroke-width="0.8"/><circle cx="966.6" cy="281.84999999999997" r="3.3" fill="#5a5a5a" stroke="#d2d2d2" stroke-width="1.2"/><circle cx="966.6" cy="281.84999999999997" r="1.5" fill="#2e2e2e"/><path d="M874 278.65 L878.8 281.84999999999997 L874 285.04999999999995Z" fill="#e8e8e8"/><path d="M818.6 281.45 C821.5 277.24999999999994 827 277.24999999999994 830 281.45 C827 285.65 821.5 285.65 818.6 281.45Z" fill="#d8d8d8"/><circle cx="824.2" cy="281.04999999999995" r="2.1" fill="#2e2e2e"/><circle cx="823.4" cy="280.24999999999994" r="0.7" fill="#eee"/>
<rect x="816" y="289.3" width="16.6" height="16.30000000000001" fill="#646464"/><path d="M816 305.6H987" stroke="#3a3a3a" stroke-width="0.9"/><rect x="887.8" y="291.1" width="12.6" height="12.900000000000011" fill="#fdfdfd" stroke="#2c2c2c" stroke-width="0.8"/><circle cx="966.6" cy="298.15000000000003" r="3.3" fill="#5a5a5a" stroke="#d2d2d2" stroke-width="1.2"/><circle cx="966.6" cy="298.15000000000003" r="1.5" fill="#2e2e2e"/><path d="M874 294.95000000000005 L878.8 298.15000000000003 L874 301.35Z" fill="#e8e8e8"/><path d="M818.6 297.75000000000006 C821.5 293.55 827 293.55 830 297.75000000000006 C827 301.95000000000005 821.5 301.95000000000005 818.6 297.75000000000006Z" fill="#d8d8d8"/><circle cx="824.2" cy="297.35" r="2.1" fill="#2e2e2e"/><circle cx="823.4" cy="296.55" r="0.7" fill="#eee"/>
<path d="M888 195 H900 V205.6 H888Z" fill="#fdfdfd"/><path d="M892.8 201.6 h2.2 v3.6 h-2.2z" fill="#d88a3a"/><path d="M895.6 201.6 h1.2 v3.6 h-1.2z" fill="#8a4a1a"/>
<path d="M897 226 C891 228 890 234 894 238" fill="none" stroke="#9a6a4a" stroke-width="1.2"/>
<path d="M889 250 C893 253 897 252 899 248" fill="none" stroke="#c8c8a0" stroke-width="0.8"/>
<path d="M889.5 259 C895 260 898 264 899 270" fill="none" stroke="#cfcfcf" stroke-width="0.8"/>
<path d="M892 276 C896 277 898 281 898.6 285" fill="none" stroke="#e0e0e0" stroke-width="0.8"/>
<path d="M889 292 C890 298 893 302 897 304" fill="none" stroke="#b0b0b0" stroke-width="1"/>
<path d="M832.6 199V306 M958.4 199V306" stroke="#3a3a3a" stroke-width="0.9"/>
</g>
<rect x="987" y="201.5" width="9.5" height="104" fill="#343434"/>
<rect x="987.3" y="272" width="9" height="16" fill="#8c8c8c"/>
<path d="M988.4 209.6 L991.8 205.4 L995.2 209.6Z M988.4 299.8 L995.2 299.8 L991.8 304Z" fill="#e4e4e4"/>
<!-- footer icons -->
<circle cx="894.8" cy="313" r="2.9" fill="none" stroke="#e0e0e0" stroke-width="1.3"/><path d="M892.6 315.4 L889.4 318.4" stroke="#e0e0e0" stroke-width="1.5"/>
<rect x="908.6" y="310.4" width="7" height="7.6" fill="none" stroke="#5e5e5e" stroke-width="1"/><rect x="911" y="313" width="5.6" height="6" fill="#585858"/>
<path d="M928.4 310.6 V314 H931.6 M930.4 312.4 L932 314 L930.4 315.6" fill="none" stroke="#e4e4e4" stroke-width="1"/><path d="M933.6 310.4 H939.6 V317.6 H935.8 V313.6 H933.6Z" fill="#e8e8e8"/>
<path d="M951 310.4 H957.6 V317.6 H953.6 V314.4 H951Z" fill="#e8e8e8"/><path d="M951 315 V317.6 H953" fill="none" stroke="#bdbdbd" stroke-width="0.8"/>
<path d="M971.4 312.6 H978.4 M973.4 312.4 V311 H976.4 V312.4 M972 313 V318.6 H977.8 V313" fill="none" stroke="#5e5e5e" stroke-width="1"/>
</svg>
<div class="a ui" style="left:905px;top:211.79999999999998px;color:#bebebe;letter-spacing:1.5px;font-weight:700">&lt;...</div><div class="a ui" style="left:905px;top:228.2px;color:#bebebe;letter-spacing:1.5px;font-weight:700">&lt;...</div><div class="a ui" style="left:905px;top:244.6px;color:#bebebe;letter-spacing:1.5px;font-weight:700">&lt;...</div><div class="a ui" style="left:905px;top:261.0px;color:#bebebe;letter-spacing:1.5px;font-weight:700">&lt;...</div><div class="a ui" style="left:905px;top:277.6px;color:#bebebe;letter-spacing:1.5px;font-weight:700">&lt;...</div><div class="a ui" style="left:905px;top:294.0px;color:#bebebe;letter-spacing:1.5px;font-weight:700">&lt;...</div>
<div class="a" style="left:904px;top:201.5px;width:30px;height:4.6px;overflow:hidden"><div class="a ui" style="left:1px;top:-6.1px;color:#9a9a9a;letter-spacing:1.5px">&lt;...</div></div>
<div class="a ui" style="left:816.6px;top:309.6px;color:#ededed;font-weight:bold;letter-spacing:0.2px">1 个图层</div>

<!-- gradient panel -->
<div class="a" style="left:812px;top:324px;width:188px;height:14px;background:#313131"></div>
<div class="a" style="left:812px;top:337px;width:188px;height:169px;background:#484848"></div>
<div class="a" style="left:812px;top:324px;width:34.5px;height:14px;background:#484848"></div>
<div class="a" style="left:886px;top:325px;width:1px;height:12px;background:#2b2b2b"></div>
<svg class="a" style="left:816px;top:327px" width="5" height="9"><path d="M0.3 3.6 L2.5 0.6 L4.7 3.6Z M0.3 5.4 L2.5 8.4 L4.7 5.4Z" fill="#e0e0e0"/></svg>
<div class="a ui" style="left:822.5px;top:326.6px;color:#f2f2f2;font-weight:bold">渐变</div>
<div class="a ui" style="left:852.5px;top:326.6px;color:#a2a2a2;letter-spacing:-0.1px">透明度</div>
<svg class="a" style="left:986px;top:329px" width="12" height="7"><path d="M0 0.6 L4.4 0.6 L2.2 3.4Z" fill="#d8d8d8"/><path d="M5 0.8 H12 M5 3.2 H12 M5 5.6 H12" stroke="#9a9a9a" stroke-width="1"/></svg>
<div class="a" style="left:817.7px;top:343.3px;width:22.6px;height:23.6px;background:linear-gradient(90deg,#a8622a 0%,#cc8c4c 10%,#f2d4aa 27%,#f9e6c8 37%,#ecc08a 48%,#d48c48 62%,#c47a38 76%,#a65a24 90%,#8c4618 100%);box-shadow:0 0 0 0.6px #333"></div>
<svg class="a" style="left:843px;top:353.6px" width="5" height="4"><path d="M0.4 0.6 L4.6 0.6 L2.5 3.2Z" fill="#e0e0e0"/></svg>
<div class="a ui" style="left:856px;top:346.6px;color:#ececec;font-weight:bold">类型 :</div>
<div class="a" style="left:885px;top:343.4px;width:110px;height:14.2px;background:linear-gradient(#606060,#6a6a6a);border:1px solid #3a3a3a"></div>
<svg class="a" style="left:985px;top:349px" width="8" height="5"><path d="M0.4 0.4 L7.2 0.4 L3.8 4.2Z" fill="#ececec"/></svg>
<div class="a ui" style="left:856px;top:366px;color:#7c7c7c">描边 :</div>
<svg class="a" style="left:885px;top:362px" width="56" height="19">
<rect x="0.5" y="0.5" width="53.6" height="17.4" fill="none" stroke="#404040" stroke-width="0.8"/>
<rect x="1.6" y="1.6" width="16.4" height="15.2" fill="#595959"/><rect x="19" y="1.6" width="16.4" height="15.2" fill="#595959"/><rect x="36.4" y="1.6" width="16.4" height="15.2" fill="#595959"/>
<g fill="none" stroke="#747474" stroke-width="1.4"><path d="M5 15 V5 H15 V15"/><path d="M22.4 15 V5 H33"/><path d="M39.8 15 V5 H50.4"/></g>
<g fill="#666"><rect x="8" y="8" width="6" height="7"/><rect x="25.4" y="8" width="8" height="7"/><rect x="43" y="9" width="7.6" height="6"/></g>
</svg>
<!-- fill/stroke in gradient panel -->
<svg class="a" style="left:815px;top:370px" width="27" height="26">
<path d="M9.8 10 H25.3 V24.7 H9.8Z M14.4 14.4 V20.4 H20.8 V14.4Z" fill="#fdfdfd" fill-rule="evenodd"/>
<path d="M9.4 25.1 L25.7 9.6" stroke="#c8242c" stroke-width="1.3"/>
<path d="M14.4 20.4 L14.4 18.4 L18.8 14.4 L20.8 14.4 L20.8 14.8 L15 20.4Z" fill="#b0343a"/>
<rect x="2" y="1.8" width="15" height="15" fill="#fefefe" stroke="#3c3c3c" stroke-width="0.6"/>
</svg>
<!-- angle -->
<svg class="a" style="left:869px;top:389px" width="12" height="9"><path d="M1 8 H11 M2.5 8 L6 2.4 L9.5 8" fill="none" stroke="#686868" stroke-width="1"/></svg>
<div class="a" style="left:885px;top:386px;width:40.6px;height:13.2px;background:#787878;border:1px solid #404040"></div>
<div class="a" style="left:925.4px;top:386px;width:12.8px;height:13.2px;background:#686868;border:1px solid #404040;border-left:none"></div>
<svg class="a" style="left:928.4px;top:391px" width="7" height="5"><path d="M0.4 0.4 L6.4 0.4 L3.4 4Z" fill="#9a9a9a"/></svg>
<!-- aspect -->
<div class="a" style="left:897.6px;top:406px;width:28px;height:13.2px;background:#7a7a7a;border:1px solid #404040;border-left:none;border-radius:0"></div>
<div class="a" style="left:925.4px;top:406px;width:12.4px;height:13.2px;background:#686868;border:1px solid #404040;border-left:none"></div>
<svg class="a" style="left:928.2px;top:411px" width="7" height="5"><path d="M0.4 0.4 L6.4 0.4 L3.4 4Z" fill="#9a9a9a"/></svg>
<!-- gradient slider with watermark -->
<div class="a" style="left:820.4px;top:430.6px;width:153.4px;height:15.8px;background:linear-gradient(90deg,#d6944c 0%,#d99a54 30%,#dfa660 48%,#e4b070 60%,#d89048 74%,#b5622a 79%,#c87636 85%,#dc9452 89.5%,#c87838 94%,#a65c26 98%,#8e4a1e 100%)"></div>
<div class="a" id="wm" style="left:820px;top:428.8px;width:156px;height:17.8px;overflow:hidden">
<div class="a" style="left:12px;top:-2px;width:48.6px;height:48.6px;border-radius:50%;border:6px solid #fbf4e8"></div>
<div class="a sans" style="left:-44.2px;top:-11px;font-size:34px;line-height:34px;color:#fcf8f0;font-weight:bold">Bai</div>
<div class="a sans" style="left:27px;top:2.6px;font-size:17px;line-height:18px;color:#efd3a4;font-weight:bold;letter-spacing:0.3px">du</div>
<div class="a sans" style="left:62px;top:-0.6px;font-size:19px;line-height:19px;color:#fdfaf4;font-weight:bold;letter-spacing:0.4px;transform:scaleX(1.56);transform-origin:0 0">经验</div>
<div class="a" style="left:22px;top:0;width:32px;height:3px;background:#484848;border-radius:0 0 3px 3px"></div>
</div>
<svg class="a" style="left:983px;top:435px" width="9" height="11"><path d="M0.6 2.6 H8.4 M3 2.4 V1 H6 V2.4 M1.4 3.2 V10 H7.6 V3.2 M3.4 5 V8.4 M5.6 5 V8.4" fill="none" stroke="#666" stroke-width="1"/></svg>
<div class="a ui" style="left:856px;top:491px;color:#727272">位置</div>
<!-- panel bottom -->
<div class="a" style="left:809px;top:506px;width:191px;height:2px;background:#2b2b2b"></div>
<!-- IME bar -->
<div class="a" style="left:874px;top:489px;width:124.6px;height:17px;background:#fdfdfd"></div>
<svg class="a" style="left:868px;top:487px" width="26" height="21"><path d="M5 2.4 L22.6 2.4 C24 2.4 24.6 3.2 24.4 4.6 L22.6 16 C22.4 17.4 21.6 18.2 20.2 18.6 L9 19.4 C7.6 19.4 6.8 18.6 6.4 17.4 L3.2 4.8 C2.8 3.4 3.6 2.4 5 2.4Z" fill="#3aa621"/>
<path d="M18.8 6.6 C16.4 5.2 11.2 5 10.6 7.6 C10 10.4 18.4 9.8 17.8 13.2 C17.2 16 11.6 15.8 8.6 14" fill="none" stroke="#fff" stroke-width="2.4"/></svg>
<div class="a sans" style="left:896.6px;top:490.4px;font-size:11.4px;line-height:13px;color:#2a2e3c;font-weight:bold">英</div>
<svg class="a" style="left:912px;top:489px" width="88" height="17">
<path d="M10.4 3 C12.8 7.4 9.6 11.8 3 12 C7.6 15 13.8 12.2 13.4 7 C13.2 5 12 3.6 10.4 3Z" fill="#3a3f50"/>
<circle cx="22.6" cy="5.4" r="1.3" fill="#3a3f50"/><path d="M26 8.4 C28 8.2 28.4 10.4 26.2 12.4 C26.8 10.8 26.4 10 25.4 9.8Z" fill="#3a3f50" stroke="#3a3f50" stroke-width="0.8"/>
<rect x="36.6" y="4.2" width="11.4" height="8" rx="1" fill="none" stroke="#3a3f50" stroke-width="1.4"/><path d="M38.6 6.6 H46 M38.6 9.6 H46" stroke="#3a3f50" stroke-width="1.2" stroke-dasharray="1.4 0.9"/>
<circle cx="60" cy="4.8" r="2.2" fill="#c8d0d0"/><path d="M55.4 13 C55.4 8.4 57.4 7.4 60 7.4 C62.6 7.4 64.6 8.4 64.6 13Z" fill="#cdd6d6"/>
<path d="M72 13 L77.4 7.2 C76.6 4.6 78.6 2.4 81.4 3 L79 5.6 L80 7 L81.6 7.4 L83 5 C83.6 7.6 81.6 9.6 79.2 9 L73.8 14.8 C72.6 15.6 71.2 14.2 72 13Z" fill="#3a3f50"/>
</svg>
<!-- orange badge top right -->
<svg class="a" style="left:984px;top:0" width="16" height="40"><circle cx="19.6" cy="21.8" r="12.6" fill="#f3d9b4"/><circle cx="19.6" cy="21.8" r="11.6" fill="#f5921e"/><path d="M10.8 19.4 V23.8 M13.6 19.4 V23.8 M16.2 19.4 V23.8" stroke="#fbe6c8" stroke-width="1.7"/></svg>
</div></body></html>
